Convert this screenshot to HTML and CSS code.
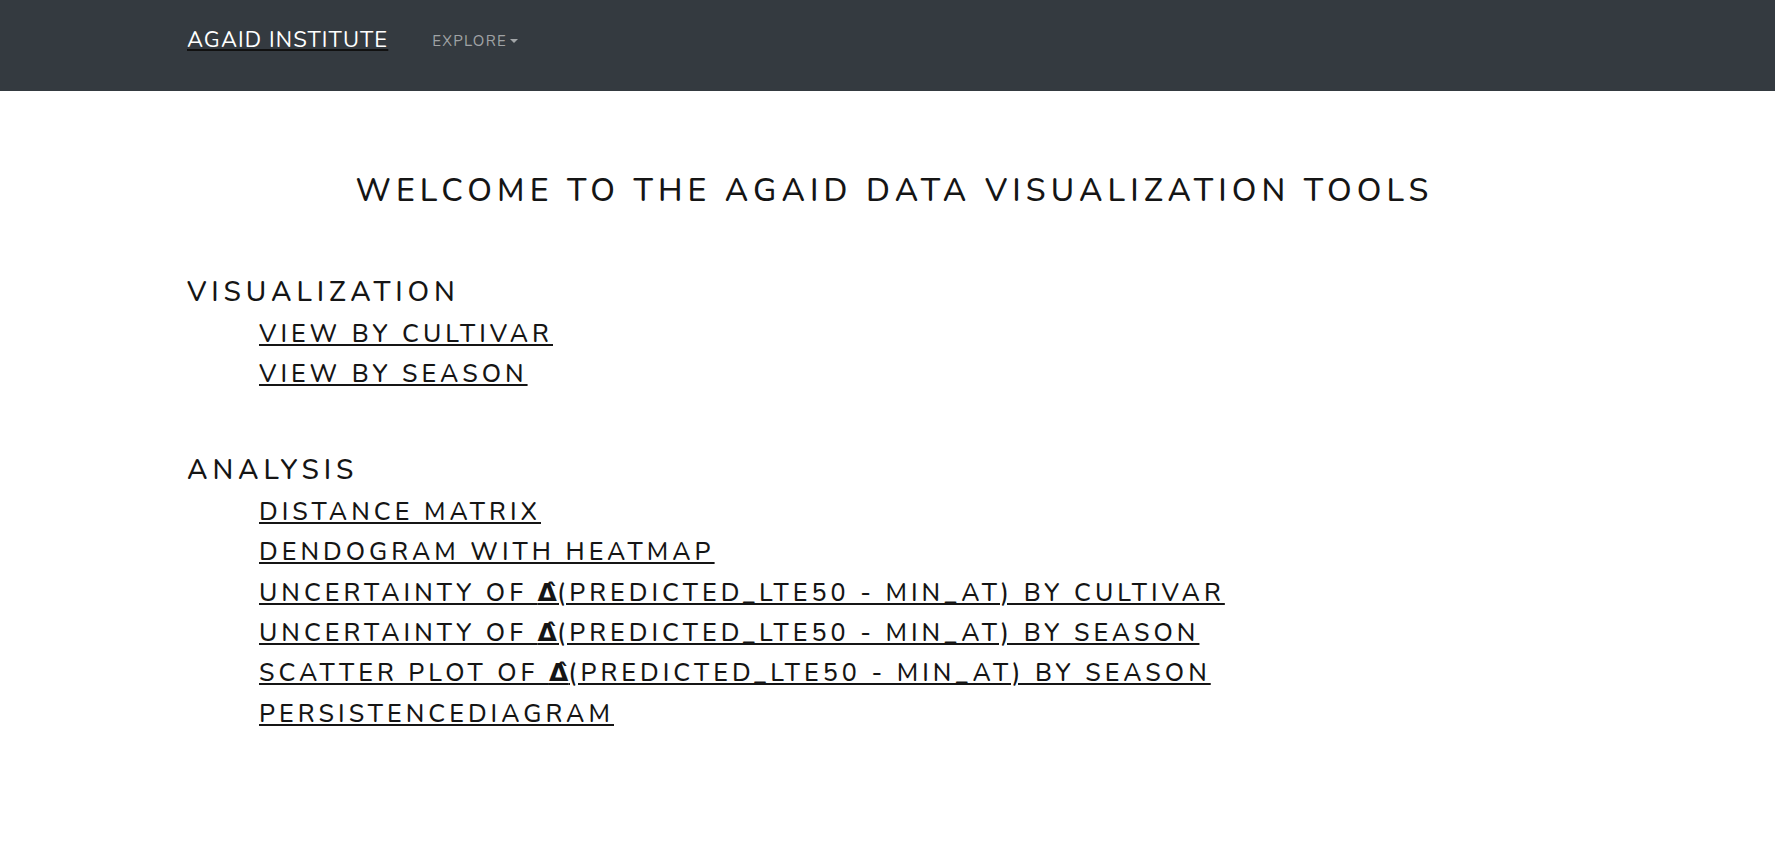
FILE: index.html
```html
<!DOCTYPE html>
<html lang="en">
<head>
<meta charset="utf-8">
<title>AgAID Data Visualization Tools</title>
<link rel="stylesheet" href="styles.css">
</head>
<body>
<nav class="navbar">
  <a class="brand" href="#">AGAID INSTITUTE</a>
  <a class="nav-link" href="#">EXPLORE<span class="caret"></span></a>
</nav>
<main class="content">
  <h1 class="title">WELCOME TO THE AGAID DATA VISUALIZATION TOOLS</h1>
  <section class="group">
    <h3 class="group-title">VISUALIZATION</h3>
    <ul class="links">
      <li><a href="#">VIEW BY CULTIVAR</a></li>
      <li><a href="#">VIEW BY SEASON</a></li>
    </ul>
  </section>
  <section class="group group-analysis">
    <h3 class="group-title">ANALYSIS</h3>
    <ul class="links">
      <li><a href="#">DISTANCE MATRIX</a></li>
      <li><a href="#">DENDOGRAM WITH HEATMAP</a></li>
      <li><a href="#">UNCERTAINTY OF <span class="delta">Δ̂</span>(PREDICTED_LTE50 - MIN_AT) BY CULTIVAR</a></li>
      <li><a href="#">UNCERTAINTY OF <span class="delta">Δ̂</span>(PREDICTED_LTE50 - MIN_AT) BY SEASON</a></li>
      <li><a href="#">SCATTER PLOT OF <span class="delta">Δ̂</span>(PREDICTED_LTE50 - MIN_AT) BY SEASON</a></li>
      <li><a href="#">PERSISTENCEDIAGRAM</a></li>
    </ul>
  </section>
</main>
</body>
</html>
```
FILE: styles.css
```css
body {
  margin: 0;
  font-family: "Nunito", "Lato", "Noto Sans", sans-serif;
  color: #151515;
  background: #fff;
}
.navbar {
  height: 91px;
  background: #343a40;
  display: flex;
  align-items: flex-start;
  padding: 0 187px;
  box-sizing: border-box;
}
.brand {
  margin-top: 26px;
  font-size: 22px;
  line-height: 28px;
  color: #fff;
  text-decoration: underline;
  text-decoration-color: #111;
  letter-spacing: 0.05em;
}
.nav-link {
  margin-left: 44px;
  margin-top: 31px;
  font-size: 15px;
  line-height: 20px;
  color: rgba(255,255,255,0.55);
  text-decoration: none;
  letter-spacing: 0.085em;
  display: flex;
  align-items: center;
}
.caret {
  display: inline-block;
  width: 0;
  height: 0;
  margin-left: 3px;
  border-left: 4px solid transparent;
  border-right: 4px solid transparent;
  border-top: 4px solid rgba(255,255,255,0.55);
}
.content {
  padding: 0 187px;
}
.title {
  margin: 0;
  padding: 80px 0 0 14px;
  text-align: center;
  font-size: 32px;
  line-height: 40px;
  font-weight: 500;
  letter-spacing: 0.16em;
}
.group {
  margin-top: 63px;
}
.group-analysis {
  margin-top: 57px;
}
.group-title {
  margin: 0 0 4px;
  font-size: 28px;
  line-height: 36px;
  font-weight: 500;
  letter-spacing: 0.175em;
}
.links {
  list-style: none;
  margin: 0;
  padding: 0 0 0 72px;
}
.links li {
  font-size: 25px;
  line-height: 40.4px;
  font-weight: 500;
  letter-spacing: 0.162em;
}
.links a {
  color: #151515;
  text-decoration: underline;
}
.delta {
  font-family: "DejaVu Sans", sans-serif;
  font-weight: 700;
  letter-spacing: 0;
}
```
